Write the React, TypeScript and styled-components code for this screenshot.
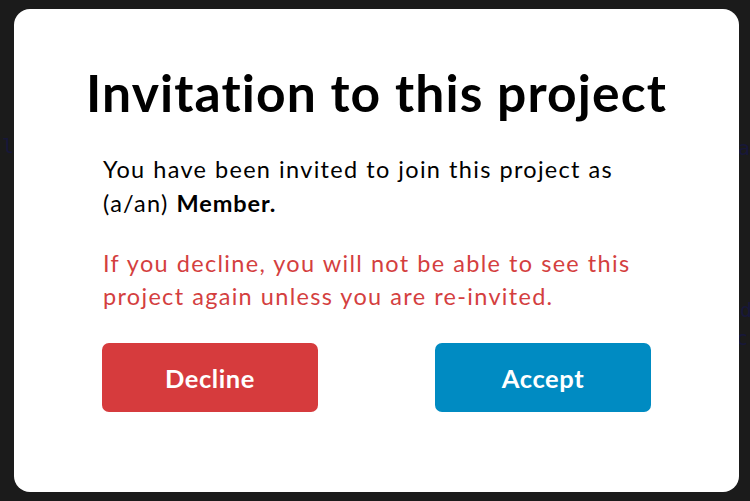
import React from "react";
import styled, { createGlobalStyle } from "styled-components";

const Global = createGlobalStyle`
  html, body { margin: 0; padding: 0; background: #1b1b1b; }
  body { width: 750px; height: 501px; overflow: hidden; font-family: "Lato", "Open Sans", sans-serif; }
`;

const Page = styled.div`
  position: relative;
  width: 750px;
  height: 501px;
  background: #1b1b1b;
  overflow: hidden;
`;

const BackText = styled.span<{ $x: number; $y: number }>`
  position: absolute;
  left: ${(p) => p.$x}px;
  top: ${(p) => p.$y}px;
  font-family: "DejaVu Sans Mono", monospace;
  font-size: 20px;
  line-height: 24px;
  color: #17173a;
  white-space: nowrap;
`;

const Overlay = styled.div`
  position: absolute;
  inset: 0;
  padding: 9px 11px 9px 14px;
  display: flex;
`;

const Modal = styled.div`
  width: 725px;
  height: 483px;
  background: #ffffff;
  border-radius: 16px;
  box-sizing: border-box;
  padding: 53px 88px 0 88px;
  display: flex;
  flex-direction: column;
  align-items: center;
`;

const Title = styled.h1`
  margin: 0;
  font-size: 51.6px;
  font-weight: 700;
  line-height: 60px;
  color: #000;
  white-space: nowrap;
  letter-spacing: 1.1px;
`;

const Body = styled.p<{ $color?: string; $mt: number; $lh: number }>`
  align-self: stretch;
  margin: ${(p) => p.$mt}px 0 0 0;
  font-size: 23.5px;
  line-height: ${(p) => p.$lh}px;
  letter-spacing: 1.3px;
  word-spacing: 0.5px;
  color: ${(p) => p.$color ?? "#000"};
  padding-left: 1px;
`;

const Strong = styled.strong`
  font-weight: 700;
  letter-spacing: 0.9px;
`;

const Actions = styled.div`
  align-self: stretch;
  display: flex;
  justify-content: space-between;
  margin-top: 30px;
`;

const Button = styled.button<{ $bg: string }>`
  width: 216px;
  height: 69px;
  border: none;
  border-radius: 7px;
  background: ${(p) => p.$bg};
  color: #fff;
  font-family: "Lato", "Open Sans", sans-serif;
  font-weight: 700;
  font-size: 25.5px;
  letter-spacing: 0.6px;
  padding: 0;
  cursor: pointer;
`;

export default function App() {
  return (
    <>
      <Global />
      <Page>
        <BackText $x={2} $y={134}>l</BackText>
        <BackText $x={738} $y={136}>a</BackText>
        <BackText $x={740} $y={298}>d</BackText>
        <BackText $x={736} $y={326}>cr</BackText>
        <Overlay>
          <Modal>
            <Title>Invitation to this project</Title>
            <Body $mt={30} $lh={34}>
              You have been invited to join this project as (a/an){" "}
              <Strong>Member.</Strong>
            </Body>
            <Body $mt={27} $lh={33} $color="#d43f3f">
              If you decline, you will not be able to see this project again
              unless you are re-invited.
            </Body>
            <Actions>
              <Button $bg="#d63b3d">Decline</Button>
              <Button $bg="#008bc2">Accept</Button>
            </Actions>
          </Modal>
        </Overlay>
      </Page>
    </>
  );
}
